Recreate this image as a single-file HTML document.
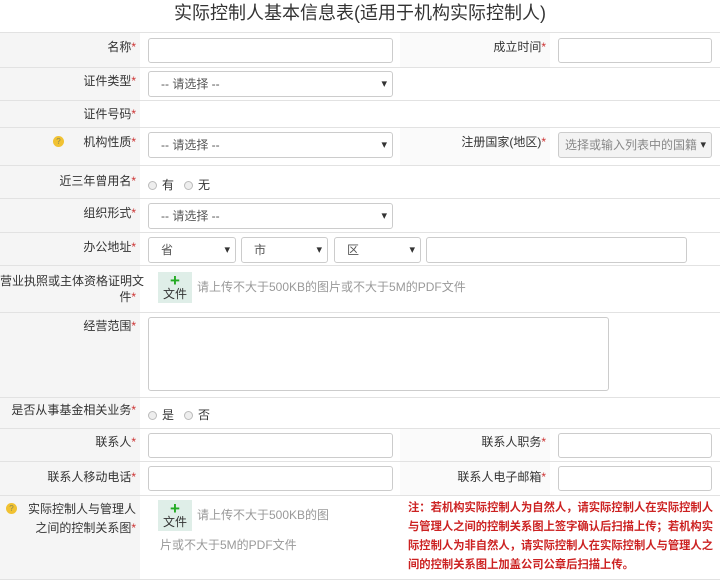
<!DOCTYPE html>
<html><head><meta charset="utf-8"><style>
*{box-sizing:border-box;margin:0;padding:0}
body{width:720px;height:586px;background:#fff;font-family:"Liberation Sans","Noto Sans CJK SC",sans-serif;font-size:12px;color:#333;position:relative;overflow:hidden}
.a{position:absolute}
.title{left:0;top:0;width:720px;height:32px;text-align:center;font-size:18px;line-height:26px;color:#333;padding-left:0}
.row{left:0;width:720px;border-top:1px solid #e2e2e2}
.lab{background:#f5f5f5;left:0;width:140px;text-align:right;padding-right:4px}
.lab2{background:#fafafa;left:400px;width:150px;text-align:right;padding-right:4px}
.r{color:#c33}
.in{border:1px solid #ccc;border-radius:3px;background:#fff;height:25px}
.sel{border:1px solid #ccc;border-radius:3px;background:#fff;height:26px;color:#555;padding-left:12px;line-height:24px}
.sel:after{content:"▾";position:absolute;right:5px;top:0;font-size:11px;color:#333}
.rad{display:inline-block;width:9px;height:9px;border:1px solid #bbb;border-radius:50%;background:#eee;margin-right:5px;vertical-align:-1px}
.up{background:#dfeee8;width:34px;height:31px;text-align:center;font-size:12px;line-height:13px;padding-top:2px}
.up b{color:#2a2;font-size:17px;display:block;line-height:14px}
.hint{color:#999}
.q{width:11px;height:11px;border-radius:50%;background:#f1c232;color:#885;font-size:8px;text-align:center;line-height:11px}
</style></head><body>
<div class="a title">实际控制人基本信息表(适用于机构实际控制人)</div>

<div class="a row" style="top:32px;height:35px"></div>
<div class="a lab" style="top:33px;height:34px;line-height:28px">名称<span class="r">*</span></div>
<div class="a in" style="left:148px;top:38px;width:245px"></div>
<div class="a lab2" style="top:33px;height:34px;line-height:28px">成立时间<span class="r">*</span></div>
<div class="a in" style="left:558px;top:38px;width:154px"></div>

<div class="a row" style="top:67px;height:33px"></div>
<div class="a lab" style="top:68px;height:32px;line-height:26px">证件类型<span class="r">*</span></div>
<div class="a sel" style="left:148px;top:71px;width:245px">-- 请选择 --</div>

<div class="a row" style="top:100px;height:27px"></div>
<div class="a lab" style="top:101px;height:26px;line-height:26px">证件号码<span class="r">*</span></div>

<div class="a row" style="top:127px;height:38px"></div>
<div class="a lab" style="top:128px;height:37px;line-height:28px">机构性质<span class="r">*</span></div>
<div class="a q" style="left:53px;top:136px">?</div>
<div class="a sel" style="left:148px;top:132px;width:245px">-- 请选择 --</div>
<div class="a lab2" style="top:128px;height:37px;line-height:28px">注册国家(地区)<span class="r">*</span></div>
<div class="a sel" style="left:558px;top:132px;width:154px;background:#f3f3f3;color:#888;padding-left:6px">选择或输入列表中的国籍</div>

<div class="a row" style="top:165px;height:33px"></div>
<div class="a lab" style="top:166px;height:32px;line-height:30px">近三年曾用名<span class="r">*</span></div>
<div class="a" style="left:148px;top:176px"><span class="rad"></span>有 &nbsp;&nbsp;<span class="rad"></span>无</div>

<div class="a row" style="top:198px;height:34px"></div>
<div class="a lab" style="top:199px;height:33px;line-height:28px">组织形式<span class="r">*</span></div>
<div class="a sel" style="left:148px;top:203px;width:245px">-- 请选择 --</div>

<div class="a row" style="top:232px;height:33px"></div>
<div class="a lab" style="top:233px;height:32px;line-height:28px">办公地址<span class="r">*</span></div>
<div class="a sel" style="left:148px;top:237px;width:88px">省</div>
<div class="a sel" style="left:241px;top:237px;width:87px">市</div>
<div class="a sel" style="left:334px;top:237px;width:87px">区</div>
<div class="a in" style="left:426px;top:237px;width:261px;height:26px"></div>

<div class="a row" style="top:265px;height:47px"></div>
<div class="a lab" style="top:266px;height:46px;line-height:16px;padding-top:7px;white-space:nowrap;text-align:right">营业执照或主体资格证明文<br>件<span class="r">*</span></div>
<div class="a up" style="left:158px;top:272px"><b>+</b>文件</div>
<div class="a hint" style="left:197px;top:278px">请上传不大于500KB的图片或不大于5M的PDF文件</div>

<div class="a row" style="top:312px;height:85px"></div>
<div class="a lab" style="top:313px;height:84px;line-height:26px">经营范围<span class="r">*</span></div>
<div class="a in" style="left:148px;top:317px;width:461px;height:74px"></div>

<div class="a row" style="top:397px;height:31px"></div>
<div class="a lab" style="top:398px;height:30px;line-height:24px">是否从事基金相关业务<span class="r">*</span></div>
<div class="a" style="left:148px;top:406px"><span class="rad"></span>是 &nbsp;&nbsp;<span class="rad"></span>否</div>

<div class="a row" style="top:428px;height:33px"></div>
<div class="a lab" style="top:429px;height:32px;line-height:26px">联系人<span class="r">*</span></div>
<div class="a in" style="left:148px;top:433px;width:245px"></div>
<div class="a lab2" style="top:429px;height:32px;line-height:26px">联系人职务<span class="r">*</span></div>
<div class="a in" style="left:558px;top:433px;width:154px"></div>

<div class="a row" style="top:461px;height:34px"></div>
<div class="a lab" style="top:462px;height:33px;line-height:30px">联系人移动电话<span class="r">*</span></div>
<div class="a in" style="left:148px;top:466px;width:245px"></div>
<div class="a lab2" style="top:462px;height:33px;line-height:30px">联系人电子邮箱<span class="r">*</span></div>
<div class="a in" style="left:558px;top:466px;width:154px"></div>

<div class="a row" style="top:495px;height:85px;border-bottom:1px solid #e2e2e2"></div>
<div class="a lab" style="top:496px;height:83px;line-height:19px;padding-top:4px">实际控制人与管理人<br>之间的控制关系图<span class="r">*</span></div>
<div class="a q" style="left:6px;top:503px">?</div>
<div class="a up" style="left:158px;top:500px"><b>+</b>文件</div>
<div class="a hint" style="left:197px;top:506px">请上传不大于500KB的图</div>
<div class="a hint" style="left:160px;top:536px">片或不大于5M的PDF文件</div>
<div class="a" style="left:408px;top:499px;width:310px;color:#c22;font-weight:bold;font-size:11.3px;line-height:19px">注：若机构实际控制人为自然人，请实际控制人在实际控制人与管理人之间的控制关系图上签字确认后扫描上传；若机构实际控制人为非自然人，请实际控制人在实际控制人与管理人之间的控制关系图上加盖公司公章后扫描上传。</div>
</body></html>
